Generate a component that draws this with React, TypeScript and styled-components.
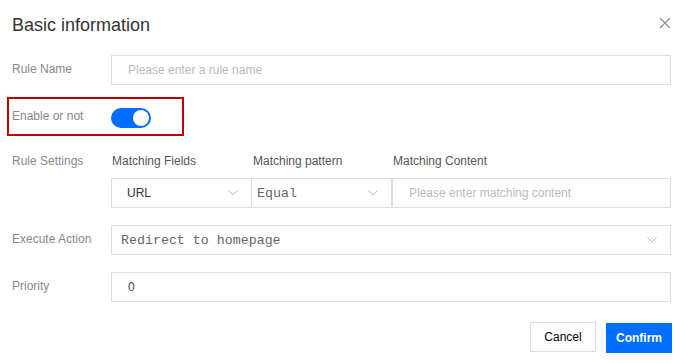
import React, { useState } from "react";
import styled, { createGlobalStyle } from "styled-components";

const GlobalStyle = createGlobalStyle`
	html, body {
		margin: 0;
		padding: 0;
		background: #fff;
		font-family: "Liberation Sans", Arial, sans-serif;
	}
	* {
		box-sizing: border-box;
	}
`;

const Dialog = styled.div`
	width: 686px;
	height: 363px;
	background: #fff;
	padding: 0 15px 0 12px;
	display: flex;
	flex-direction: column;
`;

const Header = styled.div`
	height: 50px;
	display: flex;
	align-items: center;
	justify-content: space-between;
`;

const Title = styled.h2`
	margin: 0;
	font-size: 18px;
	font-weight: normal;
	color: #333;
`;

const CloseButton = styled.button`
	border: 0;
	background: none;
	padding: 0;
	width: 14px;
	height: 14px;
	margin-right: -1px;
	margin-top: -4px;
	display: flex;
	cursor: pointer;
`;

const Row = styled.div<{ $top: number }>`
	display: flex;
	align-items: center;
	margin-top: ${(p) => p.$top}px;
`;

const Label = styled.div<{ $top?: number }>`
	width: 99px;
	flex-shrink: 0;
	font-size: 12px;
	color: #888;
	padding-bottom: 2px;
	padding-top: ${(p) => p.$top ?? 0}px;
`;

const TextInput = styled.input<{ $pad?: number }>`
	flex: 1;
	min-width: 0;
	height: 30px;
	border: 1px solid #ddd;
	outline: none;
	padding: 0 ${(p) => p.$pad ?? 16}px;
	font-family: "Liberation Sans", Arial, sans-serif;
	font-size: 12px;
	color: #444;
	&::placeholder {
		color: #bbb;
	}
`;

const Highlight = styled.div`
	display: flex;
	align-items: center;
	width: 167px;
	height: 29px;
	outline: 2px solid #c00000;
	outline-offset: 3px;
`;

const Track = styled.button<{ $on: boolean }>`
	width: 40px;
	height: 20px;
	border: 0;
	border-radius: 10px;
	padding: 2px;
	background: ${(p) => (p.$on ? "#006eff" : "#ccc")};
	display: flex;
	justify-content: ${(p) => (p.$on ? "flex-end" : "flex-start")};
	cursor: pointer;
	margin-top: 2px;
`;

const Knob = styled.span`
	width: 16px;
	height: 16px;
	border-radius: 50%;
	background: #fff;
`;

const SettingsRow = styled.div`
	display: flex;
	margin-top: 14px;
`;

const SettingsGrid = styled.div`
	flex: 1;
	display: grid;
	grid-template-columns: 141px 140px 1fr;
	grid-template-rows: 33px 30px;
`;

const SubLabel = styled.div`
	font-size: 12px;
	color: #555;
	padding-left: 1px;
	padding-top: 9px;
`;

const SelectBox = styled.div<{ $mono?: boolean; $pad: number; $noLeft?: boolean }>`
	height: 30px;
	border: 1px solid #ddd;
	${(p) => (p.$noLeft ? "border-left: 0;" : "")}
	display: flex;
	align-items: center;
	justify-content: space-between;
	padding: 0 13px 0 ${(p) => p.$pad}px;
	font-family: ${(p) =>
		p.$mono ? '"Liberation Mono", "DejaVu Sans Mono", monospace' : '"Liberation Sans", Arial, sans-serif'};
	font-size: ${(p) => (p.$mono ? "13.3px" : "12px")};
	color: ${(p) => (p.$mono ? "#666" : "#333")};
	flex: 1;
`;

const Footer = styled.div`
	display: flex;
	justify-content: flex-end;
	gap: 10px;
	margin-top: 20px;
	margin-right: -1px;
`;

const Button = styled.button<{ $primary?: boolean }>`
	width: 66px;
	height: 30px;
	font-family: "Liberation Sans", Arial, sans-serif;
	font-size: 12px;
	cursor: pointer;
	border: ${(p) => (p.$primary ? "0" : "1px solid #ddd")};
	background: ${(p) => (p.$primary ? "#006eff" : "#fff")};
	color: ${(p) => (p.$primary ? "#fff" : "#000")};
	font-weight: ${(p) => (p.$primary ? "bold" : "normal")};
	margin-top: ${(p) => (p.$primary ? "1px" : "0")};
`;

const Chevron = () => (
	<svg width="10" height="6" viewBox="0 0 10 6">
		<path d="M0.5 0.5 L5 5 L9.5 0.5" fill="none" stroke="#bbb" strokeWidth="1" />
	</svg>
);

const CloseIcon = () => (
	<svg width="14" height="14" viewBox="0 0 14 14">
		<path d="M2 2 L12 12 M12 2 L2 12" stroke="#888" strokeWidth="1.1" />
	</svg>
);

const App = () => {
	const [enabled, setEnabled] = useState(true);

	return (
		<Dialog>
			<GlobalStyle />
			<Header>
				<Title>Basic information</Title>
				<CloseButton aria-label="close">
					<CloseIcon />
				</CloseButton>
			</Header>

			<Row $top={5}>
				<Label>Rule Name</Label>
				<TextInput placeholder="Please enter a rule name" />
			</Row>

			<Row $top={17}>
				<Highlight>
					<Label>Enable or not</Label>
					<Track $on={enabled} onClick={() => setEnabled(!enabled)}>
						<Knob />
					</Track>
				</Highlight>
			</Row>

			<SettingsRow>
				<Label $top={9}>Rule Settings</Label>
				<SettingsGrid>
					<SubLabel>Matching Fields</SubLabel>
					<SubLabel>Matching pattern</SubLabel>
					<SubLabel>Matching Content</SubLabel>
					<SelectBox $pad={15}>
						URL
						<Chevron />
					</SelectBox>
					<SelectBox $pad={5} $mono $noLeft>
						Equal
						<Chevron />
					</SelectBox>
					<TextInput $pad={16} placeholder="Please enter matching content" />
				</SettingsGrid>
			</SettingsRow>

			<Row $top={17}>
				<Label>Execute Action</Label>
				<SelectBox $pad={9} $mono>
					Redirect to homepage
					<Chevron />
				</SelectBox>
			</Row>

			<Row $top={17}>
				<Label>Priority</Label>
				<TextInput defaultValue="0" />
			</Row>

			<Footer>
				<Button>Cancel</Button>
				<Button $primary>Confirm</Button>
			</Footer>
		</Dialog>
	);
};

export default App;
